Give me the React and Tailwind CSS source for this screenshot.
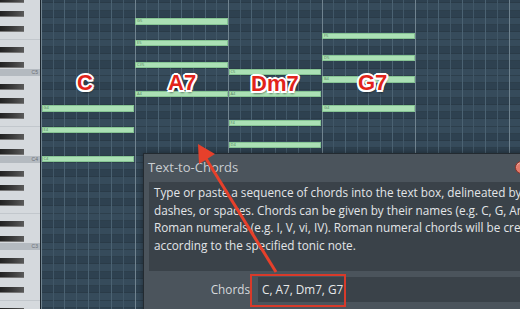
const BLACK = [1, 3, 6, 8, 10];
const NAMES = ['C', 'C#', 'D', 'D#', 'E', 'F', 'F#', 'G', 'G#', 'A', 'A#', 'B'];

// rows from top (note 82) down to note 38
const ROWS = Array.from({ length: 45 }, (_, i) => 82 - i);

const ROW_H = 7.25;
const BAR_W = 93.5;

const CHORDS = [
  [60, 64, 67],
  [69, 73, 76, 79],
  [62, 65, 69, 72],
  [67, 71, 74, 77],
];

const rowTop = (n) => (82 - n) * ROW_H - 4;
const noteName = (n) => NAMES[n % 12] + (Math.floor(n / 12) - 1);

const DESC = [
  'Type or paste a sequence of chords into the text box, delineated by commas,',
  'dashes, or spaces. Chords can be given by their names (e.g. C, G, Am, F) or',
  'Roman numerals (e.g. I, V, vi, IV). Roman numeral chords will be created',
  'according to the specified tonic note.',
];

const LABEL =
  "absolute font-['Liberation_Sans',Arial,sans-serif] font-bold text-[22px] leading-none text-[#e2231a] [text-shadow:2px_0_0_#fff,-2px_0_0_#fff,0_2px_0_#fff,0_-2px_0_#fff,1.5px_1.5px_0_#fff,-1.5px_1.5px_0_#fff,1.5px_-1.5px_0_#fff,-1.5px_-1.5px_0_#fff,1px_3px_2px_rgba(0,0,0,0.45)]";

function PianoRow({ n }) {
  const pc = n % 12;
  if (BLACK.includes(pc)) {
    return (
      <div className="h-[7.25px] bg-[#d5d9dd] flex items-center">
        <div className="h-[6px] w-[24px] bg-gradient-to-r from-[#222] via-[#3a3a3a] to-[#5a5a5a] border-b border-[#777]" />
      </div>
    );
  }
  if (pc === 0) {
    return (
      <div className="h-[7.25px] bg-[#b4bac0] flex items-center justify-end pr-[2px] text-[5px] leading-none text-[#6a7077] font-['Liberation_Sans',sans-serif]">
        {noteName(n)}
      </div>
    );
  }
  return (
    <div
      className={
        pc === 5 ? 'h-[7.25px] bg-[#d5d9dd] border-b border-[#c2c7cc]' : 'h-[7.25px] bg-[#d5d9dd]'
      }
    />
  );
}

function GridRow({ n }) {
  const black = BLACK.includes(n % 12);
  return (
    <div
      className={
        black
          ? 'h-[7.25px] bg-[#2e4150] border-b border-[#2a3b48]'
          : 'h-[7.25px] bg-[#364b5b] border-b border-[#2d3f4c]'
      }
    />
  );
}

export default function App() {
  return (
    <div className="relative w-[520px] h-[309px] overflow-hidden bg-[#2e4150] flex font-['Open_Sans',sans-serif]">
      {/* piano keys */}
      <div className="w-[41px] shrink-0 overflow-hidden border-r border-[#1b252d]">
        <div className="-mt-[4px] flex flex-col">
          {ROWS.map((n) => (
            <PianoRow key={n} n={n} />
          ))}
        </div>
      </div>

      {/* note grid */}
      <div className="relative flex-1 overflow-hidden">
        <div className="-mt-[4px] flex flex-col">
          {ROWS.map((n) => (
            <GridRow key={n} n={n} />
          ))}
        </div>

        <div className="absolute inset-0 flex">
          {Array.from({ length: 42 }, (_, i) => (
            <div
              key={i}
              className={
                i % 8 === 0
                  ? 'w-[11.6875px] shrink-0 border-l border-[#70838f]'
                  : i % 2 === 0
                  ? 'w-[11.6875px] shrink-0 border-l border-[#4b6272]'
                  : 'w-[11.6875px] shrink-0 border-l border-[#415767]'
              }
            />
          ))}
        </div>

        {CHORDS.map((notes, ci) =>
          notes.map((n) => (
            <div
              key={ci + '-' + n}
              className="absolute h-[6.25px] bg-[#abe0b5] shadow-[inset_0_0_0_1px_#86c493] flex items-center pl-[2px] text-[4px] leading-none text-[#4f7e5a]"
              style={{ left: ci * BAR_W + 0.5, width: BAR_W - 1, top: rowTop(n) + 0.5 }}
            >
              {noteName(n)}
            </div>
          ))
        )}

        <div className={LABEL + ' left-[36px] top-[72px]'}>C</div>
        <div className={LABEL + ' left-[127px] top-[72px]'}>A7</div>
        <div className={LABEL + ' left-[210px] top-[73px]'}>Dm7</div>
        <div className={LABEL + ' left-[317px] top-[72px]'}>G7</div>
      </div>

      {/* Text-to-Chords window */}
      <div className="absolute left-[143px] top-[153px] w-[400px] h-[160px] bg-[#4b545c] border-l border-t border-[#232a30] shadow-[0_0_6px_rgba(0,0,0,0.4)] flex flex-col">
        <div className="h-[28px] shrink-0 flex items-center pl-[4px] text-[13px] text-[#c9cdd1]">
          Text-to-Chords
        </div>
        <div className="ml-[5px] h-[89px] shrink-0 bg-[#3a4249] pl-[5px] pt-[2px] text-[11.75px] leading-[17.5px] text-[#e2e5e8] whitespace-nowrap">
          {DESC.map((l) => (
            <div key={l}>{l}</div>
          ))}
        </div>
        <div className="flex items-center pt-[6px]">
          <div className="w-[106px] shrink-0 text-right text-[11.75px] text-[#d6d9dc]">Chords</div>
          <div className="ml-[8px] w-[300px] shrink-0 h-[25px] bg-[#3a4249] flex items-center pl-[4px] text-[11.75px] text-[#e6e8ea]">
            C, A7, Dm7, G7
          </div>
        </div>
        <div className="absolute left-[371px] top-[7px] w-[13px] h-[13px] rounded-full bg-[#e37b6b] border border-[#8e2f25] shadow-[inset_0_1px_1px_rgba(255,255,255,0.5)]" />
      </div>

      {/* annotation */}
      <div className="absolute left-[250px] top-[274px] w-[96px] h-[33px] border-2 border-[#d83a2a]" />
      <svg className="absolute left-0 top-0" width="520" height="309" viewBox="0 0 520 309">
        <line x1="276" y1="272" x2="205" y2="157" stroke="#e6402b" strokeWidth="3" />
        <polygon points="198,144 215,154 199,164" fill="#e6402b" />
      </svg>
    </div>
  );
}
